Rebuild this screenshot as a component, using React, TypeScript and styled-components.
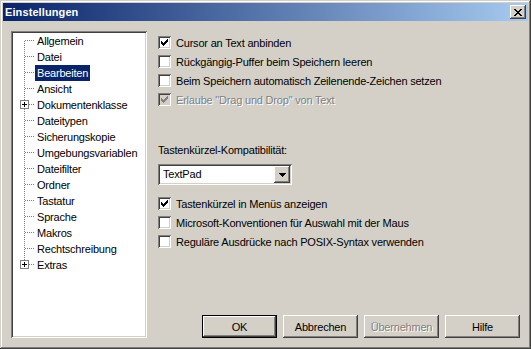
import React from 'react';
import styled, { createGlobalStyle, css } from 'styled-components';

const GlobalStyle = createGlobalStyle`
  html, body {
    margin: 0;
    padding: 0;
    background: #d4d0c8;
  }

  body {
    font-family: "Liberation Sans", Arial, sans-serif;
    font-size: 11px;
    letter-spacing: -0.2px;
    color: #000;
  }
`;

const raised = css`
  background: #d4d0c8;
  box-shadow:
    inset -1px -1px #404040,
    inset 1px 1px #fff,
    inset -2px -2px #808080,
    inset 2px 2px #d4d0c8;
`;

const sunken = css`
  box-shadow:
    inset 1px 1px #808080,
    inset -1px -1px #fff,
    inset 2px 2px #404040,
    inset -2px -2px #d4d0c8;
`;

const disabledText = css`
  color: #808080;
  text-shadow: 1px 1px #fff;
`;

const Window = styled.div`
  width: 531px;
  height: 349px;
  box-sizing: border-box;
  padding: 3px;
  display: flex;
  flex-direction: column;
  background: #d4d0c8;
  box-shadow:
    inset -1px -1px #404040,
    inset 1px 1px #d4d0c8,
    inset -2px -2px #808080,
    inset 2px 2px #fff;
`;

const TitleBar = styled.div`
  height: 18px;
  display: flex;
  align-items: center;
  justify-content: space-between;
  padding: 0 2px 0 2px;
  background: linear-gradient(90deg, #0a246a, #a6caf0);
`;

const Title = styled.span`
  color: #fff;
  font-weight: 700;
  font-size: 11px;
  letter-spacing: 0.1px;
`;

const CloseButton = styled.div`
  ${raised};
  width: 16px;
  height: 14px;
  display: flex;
  align-items: center;
  justify-content: center;
  box-sizing: border-box;
`;

const Body = styled.div`
  flex: 1;
  display: flex;
  padding: 10px 8px 8px 8px;
`;

const Tree = styled.div`
  ${sunken};
  width: 136px;
  flex-shrink: 0;
  box-sizing: border-box;
  padding: 2px;
  background: #fff;
`;

const TreeRow = styled.div`
  height: 16px;
  display: flex;
  align-items: center;
`;

const TreeLabel = styled.span<{ $selected?: boolean }>`
  height: 16px;
  line-height: 16px;
  padding: 0 2px;
  white-space: nowrap;
  background: ${({ $selected }) => ($selected ? '#0a246a' : 'transparent')};
  color: ${({ $selected }) => ($selected ? '#fff' : '#000')};
`;

const Panel = styled.div`
  flex: 1;
  display: flex;
  flex-direction: column;
  padding-left: 11px;
`;

const Group = styled.div<{ $top: number }>`
  margin-top: ${({ $top }) => $top}px;
  display: flex;
  flex-direction: column;
`;

const CheckRow = styled.label<{ $disabled?: boolean }>`
  height: 19px;
  display: flex;
  align-items: center;
  gap: 5px;
  white-space: nowrap;
  ${({ $disabled }) => $disabled && disabledText};
`;

const Box = styled.span<{ $disabled?: boolean }>`
  ${sunken};
  width: 13px;
  height: 13px;
  flex-shrink: 0;
  display: flex;
  align-items: center;
  justify-content: center;
  background: ${({ $disabled }) => ($disabled ? '#d4d0c8' : '#fff')};
`;

const FieldLabel = styled.div`
  margin-top: 35px;
  height: 13px;
  line-height: 13px;
`;

const Combo = styled.div`
  ${sunken};
  margin-top: 7px;
  width: 134px;
  height: 21px;
  box-sizing: border-box;
  padding: 2px;
  display: flex;
  background: #fff;
`;

const ComboText = styled.span`
  flex: 1;
  line-height: 17px;
  padding-left: 3px;
`;

const DropButton = styled.span`
  ${raised};
  width: 16px;
  height: 17px;
  display: flex;
  align-items: center;
  justify-content: center;
`;

const Buttons = styled.div`
  margin-top: auto;
  display: flex;
  justify-content: flex-end;
  gap: 6px;
`;

const Button = styled.div<{ $default?: boolean; $disabled?: boolean }>`
  ${raised};
  width: 75px;
  height: 23px;
  box-sizing: border-box;
  display: flex;
  align-items: center;
  justify-content: center;
  border: ${({ $default }) => ($default ? '1px solid #000' : 'none')};
  ${({ $disabled }) => $disabled && disabledText};
`;

const checkPixels = ['......x', '.....xx', 'x...xxx', 'xx.xxx.', 'xxxxx..', '.xxx...', '..x....'];
const closePixels = ['xx....xx', '.xx..xx.', '..xxxx..', '...xx...', '..xxxx..', '.xx..xx.', 'xx....xx'];
const arrowPixels = ['xxxxxxx', '.xxxxx.', '..xxx..', '...x...'];

function Pixels({ rows, color = '#000' }: { rows: string[]; color?: string }) {
  const w = rows[0].length;
  return (
    <svg width={w} height={rows.length} viewBox={`0 0 ${w} ${rows.length}`} shapeRendering="crispEdges">
      {rows.flatMap((row, y) =>
        row.split('').map((c, x) => (c === 'x' ? <rect key={`${x}-${y}`} x={x} y={y} width={1} height={1} fill={color} /> : null)),
      )}
    </svg>
  );
}

function Connector({ first, last, expandable }: { first?: boolean; last?: boolean; expandable?: boolean }) {
  const dot = { stroke: '#808080', strokeWidth: 1, strokeDasharray: '1 1' };
  return (
    <svg width={22} height={16} shapeRendering="crispEdges">
      <line x1={11.5} y1={first ? 8 : 0} x2={11.5} y2={last ? 8 : 16} {...dot} />
      <line x1={12} y1={7.5} x2={22} y2={7.5} {...dot} />
      {expandable && (
        <g>
          <rect x={7.5} y={3.5} width={8} height={8} fill="#fff" stroke="#808080" />
          <line x1={9} y1={7.5} x2={14} y2={7.5} stroke="#000" />
          <line x1={11.5} y1={5} x2={11.5} y2={10} stroke="#000" />
        </g>
      )}
    </svg>
  );
}

const treeItems = [
  { label: 'Allgemein' },
  { label: 'Datei' },
  { label: 'Bearbeiten', selected: true },
  { label: 'Ansicht' },
  { label: 'Dokumentenklasse', expandable: true },
  { label: 'Dateitypen' },
  { label: 'Sicherungskopie' },
  { label: 'Umgebungsvariablen' },
  { label: 'Dateifilter' },
  { label: 'Ordner' },
  { label: 'Tastatur' },
  { label: 'Sprache' },
  { label: 'Makros' },
  { label: 'Rechtschreibung' },
  { label: 'Extras', expandable: true },
];

interface CheckProps {
  label: string;
  checked?: boolean;
  disabled?: boolean;
}

function Check({ label, checked, disabled }: CheckProps) {
  return (
    <CheckRow $disabled={disabled}>
      <Box $disabled={disabled}>{checked && <Pixels rows={checkPixels} color={disabled ? '#808080' : '#000'} />}</Box>
      {label}
    </CheckRow>
  );
}

export default function App() {
  return (
    <>
      <GlobalStyle />
      <Window>
        <TitleBar>
          <Title>Einstellungen</Title>
          <CloseButton>
            <Pixels rows={closePixels} />
          </CloseButton>
        </TitleBar>
        <Body>
          <Tree>
            {treeItems.map((item, i) => (
              <TreeRow key={item.label}>
                <Connector first={i === 0} last={i === treeItems.length - 1} expandable={item.expandable} />
                <TreeLabel $selected={item.selected}>{item.label}</TreeLabel>
              </TreeRow>
            ))}
          </Tree>
          <Panel>
            <Group $top={2}>
              <Check label="Cursor an Text anbinden" checked />
              <Check label="Rückgängig-Puffer beim Speichern leeren" />
              <Check label="Beim Speichern automatisch Zeilenende-Zeichen setzen" />
              <Check label={'Erlaube "Drag und Drop" von Text'} checked disabled />
            </Group>
            <FieldLabel>Tastenkürzel-Kompatibilität:</FieldLabel>
            <Combo>
              <ComboText>TextPad</ComboText>
              <DropButton>
                <Pixels rows={arrowPixels} />
              </DropButton>
            </Combo>
            <Group $top={9}>
              <Check label="Tastenkürzel in Menüs anzeigen" checked />
              <Check label="Microsoft-Konventionen für Auswahl mit der Maus" />
              <Check label="Reguläre Ausdrücke nach POSIX-Syntax verwenden" />
            </Group>
            <Buttons>
              <Button $default>OK</Button>
              <Button>Abbrechen</Button>
              <Button $disabled>Übernehmen</Button>
              <Button>Hilfe</Button>
            </Buttons>
          </Panel>
        </Body>
      </Window>
    </>
  );
}
